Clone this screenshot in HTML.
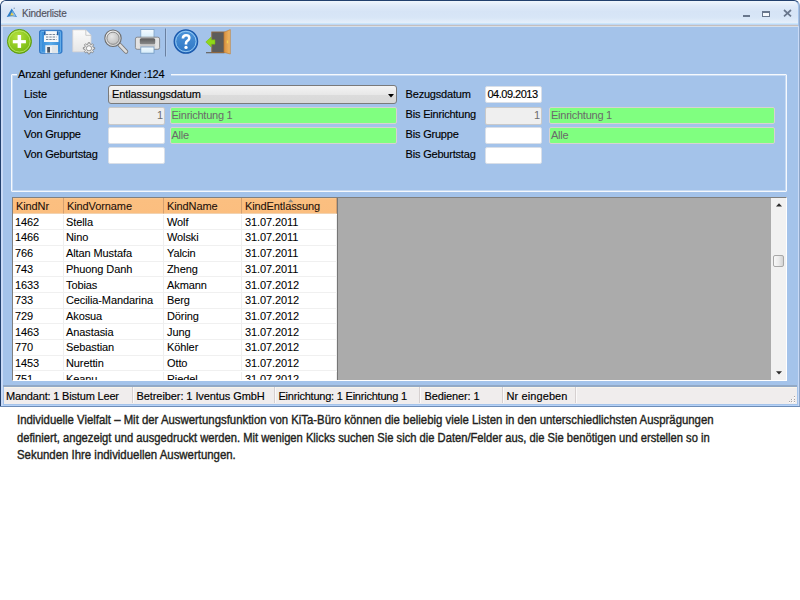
<!DOCTYPE html>
<html><head><meta charset="utf-8">
<style>
*{margin:0;padding:0;box-sizing:border-box}
html,body{width:800px;height:600px;background:#fff;overflow:hidden;position:relative;font-family:"Liberation Sans",sans-serif}
.a{position:absolute}
#win{left:0;top:0;width:800px;height:406px;background:#a4c3ea;border:1px solid #22406e;border-bottom:0;border-right-color:#8ea6c8;border-radius:6px 6px 0 0}
#bline{left:0;top:406px;width:800px;height:1.3px;background:#6d8cb6}
#bhl{left:3px;top:404.8px;width:795px;height:1px;background:#b6d2f8}
#lcol{left:1px;top:26px;width:1.8px;height:380px;background:#c9daf6}
#rcol{left:797.5px;top:26px;width:1.5px;height:380px;background:#c9daf6}
#title{left:1px;top:1px;width:797px;height:24px;background:linear-gradient(#f0f6fd,#dfeaf9 20%,#d6e4f6 45%,#d8e6f7 70%,#e6effa 92%);border-radius:5px 5px 0 0}
#tline{left:1px;top:23px;width:797px;height:1px;background:#cbe6fa}
#tline0{left:1px;top:24px;width:797px;height:1px;background:#c0d6f2}
#tline2{left:1px;top:25px;width:797px;height:1px;background:#c5bfbd}
#tline3{left:1px;top:26px;width:797px;height:1px;background:#d6dfea}
.lbl{font-size:11px;color:#000;-webkit-text-stroke:0.15px currentColor;white-space:nowrap;line-height:13px}
.tb{background:#fff;border:1px solid #d9dfe8;border-radius:2px}
.tbg{background:#efefef;border:1px solid #c9c9c9;border-radius:2px;font-size:11px;color:#6d6d6d;text-align:right;padding-right:1px;line-height:15px}
.grn{background:#80ff80;border:1px solid #d8d2d2;border-radius:2px;font-size:11px;color:#6a6a6a;padding-left:1px;letter-spacing:-0.25px;line-height:15px}
#grid{left:12px;top:197px;width:775px;height:184px;background:#ababab;border:1px solid #808080;border-right-color:#fff;border-bottom-color:#fff}
.hd{background:linear-gradient(#fcc893,#fbbf80 12%,#fbbe7f);border-right:1px solid #d4a070;border-bottom:1px solid #f2d2b0;font-size:11px;color:#1e100a;-webkit-text-stroke:0.08px currentColor;line-height:15px;padding-top:0.5px;padding-left:3px;letter-spacing:-0.1px;white-space:nowrap}
.cell{background:#fff;border-right:1px solid #efefef;border-bottom:1px solid #f0f0f0;font-size:11px;color:#000;-webkit-text-stroke:0.08px currentColor;line-height:15px;padding-top:0.3px;padding-left:2px;letter-spacing:-0.1px;white-space:nowrap;overflow:hidden}
#sb{left:758px;top:0;width:15px;height:182px;background:#f1f1f1}
#status{left:4px;top:386.5px;width:793px;height:17px;background:#f0eded;border-top:1px solid #faf5ea}
#sshadow{left:3px;top:385px;width:794px;height:1.5px;background:#92a9c6}
.sp{font-size:11px;color:#000;-webkit-text-stroke:0.15px currentColor;white-space:nowrap;line-height:17px}
.sep{width:1px;height:16px;top:1px;background:#d6d0d0;box-shadow:1px 0 0 #fbf9f9}
.txt{font-size:13.2px;color:#231f20;-webkit-text-stroke:0.4px #231f20;white-space:nowrap;transform-origin:0 0;line-height:15px}
</style></head><body>
<div id="win" class="a"></div>
<div id="bline" class="a"></div>
<div id="bhl" class="a"></div>
<div id="title" class="a"></div>
<div id="tline" class="a"></div>
<div id="tline0" class="a"></div>
<div id="lcol" class="a"></div>
<div id="rcol" class="a"></div>
<div id="tline2" class="a"></div>
<div id="tline3" class="a"></div>
<!-- title -->
<svg class="a" style="left:0;top:0" width="22" height="22" viewBox="0 0 22 22">
<path d="M11.7 8.4 L17 16.9 Q11.8 15.4 6.7 17.1 Z" fill="#2c7cc6"/>
<path d="M12.3 10.6 L15.9 16.3 Q13.8 15.7 12.4 15.6 Z" fill="#a8d0f4" opacity="0.8"/>
<path d="M11.7 12.2 L13.8 15.3 L10.2 15.5 Z" fill="#f2d24a"/>
<circle cx="14.2" cy="8.3" r="0.7" fill="#7a98b8"/>
</svg>
<div class="a lbl" style="left:22px;top:7px;font-size:10px;color:#52525e;letter-spacing:-0.2px">Kinderliste</div>
<!-- window buttons -->
<div class="a" style="left:743px;top:15px;width:6.5px;height:2.2px;background:#68768c"></div>
<div class="a" style="left:762.3px;top:10.8px;width:8px;height:6px;border:1px solid #68768c;border-top-width:2.8px;background:#f4f8fc"></div>
<svg class="a" style="left:782.5px;top:9.3px" width="9" height="8" viewBox="0 0 9 8"><path d="M1 1 L8 7.3 M8 1 L1 7.3" stroke="#68768c" stroke-width="1.7"/></svg>

<!-- toolbar -->
<svg class="a" style="left:0;top:26px" width="240" height="34" viewBox="0 26 240 34">
  <defs>
    <radialGradient id="gg" cx="0.4" cy="0.3" r="0.75"><stop offset="0" stop-color="#b4e040"/><stop offset="0.6" stop-color="#8cc81e"/><stop offset="1" stop-color="#70b010"/></radialGradient>
    <linearGradient id="bg" x1="0" y1="0" x2="0" y2="1"><stop offset="0" stop-color="#4d95da"/><stop offset="1" stop-color="#2f76c4"/></linearGradient>
    <linearGradient id="mring" x1="0" y1="0" x2="1" y2="1"><stop offset="0" stop-color="#fafafa"/><stop offset="1" stop-color="#c8c8c8"/></linearGradient>
    <radialGradient id="mglass" cx="0.4" cy="0.35" r="0.7"><stop offset="0" stop-color="#e6e6e6"/><stop offset="1" stop-color="#bdbdbd"/></radialGradient>
    <linearGradient id="doc" x1="0" y1="0" x2="0" y2="1"><stop offset="0" stop-color="#fbfbfb"/><stop offset="1" stop-color="#e6e6e6"/></linearGradient>
    <linearGradient id="paper" x1="0" y1="0" x2="0" y2="1"><stop offset="0" stop-color="#f4fbff"/><stop offset="1" stop-color="#d4ecfa"/></linearGradient>
    <linearGradient id="band" x1="0" y1="0" x2="0" y2="1"><stop offset="0" stop-color="#5a5a5a"/><stop offset="1" stop-color="#8c8c8c"/></linearGradient>
    <linearGradient id="door" x1="0" y1="0" x2="1" y2="0"><stop offset="0" stop-color="#d8903e"/><stop offset="1" stop-color="#f0b868"/></linearGradient>
    <linearGradient id="fl" x1="0" y1="0" x2="1" y2="0"><stop offset="0" stop-color="#2f86d6"/><stop offset="0.5" stop-color="#5aaae8"/><stop offset="1" stop-color="#2f86d6"/></linearGradient>
  </defs>
  <!-- green plus -->
  <circle cx="19.45" cy="41.45" r="12" fill="url(#gg)" stroke="#5c9a0e" stroke-width="1"/>
  <circle cx="19.45" cy="41.45" r="10.6" fill="none" stroke="#c8f080" stroke-width="0.9" opacity="0.75"/>
  <rect x="17.6" y="35" width="3.5" height="12.9" fill="#fff"/>
  <rect x="12.8" y="40.1" width="13.1" height="3.2" fill="#fff"/>
  <!-- floppy -->
  <rect x="39.5" y="30.3" width="22.5" height="23" rx="1.8" fill="url(#fl)" stroke="#2c72c0" stroke-width="0.9"/>
  <rect x="41" y="31.5" width="19.5" height="20.8" rx="1" fill="none" stroke="#8cc8f4" stroke-width="0.7" opacity="0.8"/>
  <rect x="44" y="31.2" width="14.5" height="10.8" fill="#f6f8fa"/>
  <rect x="44" y="31.2" width="1.6" height="4" fill="#1d5fa8"/>
  <rect x="56.9" y="31.2" width="1.6" height="4" fill="#1d5fa8"/>
  <path d="M46 34.5 H56.5 M46 37 H56.5 M46 39.5 H56.5" stroke="#6a7a8e" stroke-width="0.9" stroke-dasharray="2.4 0.9"/>
  <rect x="45.3" y="45.2" width="12.7" height="8" fill="#eef1f4"/>
  <rect x="52" y="45.2" width="6" height="8" fill="#dfe5ea"/>
  <rect x="47.2" y="47" width="2.8" height="5.6" fill="#4a5563"/>
  <!-- document gear -->
  <path d="M72.8 30 H85.8 L91 35.3 V51.8 H72.8 Z" fill="url(#doc)" stroke="#dcd6d0" stroke-width="0.7"/>
  <path d="M85.8 30 V35.3 H91" fill="#f8f8f8" stroke="#b8b8b8" stroke-width="0.7"/>
  <path d="M93.16 47.23 L94.65 47.54 L94.65 49.06 L93.16 49.37 L92.70 50.49 L93.53 51.76 L92.46 52.83 L91.19 52.00 L90.07 52.46 L89.76 53.95 L88.24 53.95 L87.93 52.46 L86.81 52.00 L85.54 52.83 L84.47 51.76 L85.30 50.49 L84.84 49.37 L83.35 49.06 L83.35 47.54 L84.84 47.23 L85.30 46.11 L84.47 44.84 L85.54 43.77 L86.81 44.60 L87.93 44.14 L88.24 42.65 L89.76 42.65 L90.07 44.14 L91.19 44.60 L92.46 43.77 L93.53 44.84 L92.70 46.11 Z" fill="#ececec" stroke="#7a7a7a" stroke-width="0.8"/>
  <circle cx="89" cy="48.3" r="2.6" fill="#fafafa" stroke="#8a8a8a" stroke-width="0.9"/>
  <!-- magnifier -->
  <path d="M119.8 45 L126 51.6" stroke="#7c7c7c" stroke-width="4.4" stroke-linecap="round"/>
  <path d="M119.8 45 L126 51.6" stroke="#dedede" stroke-width="2.6" stroke-linecap="round"/>
  <circle cx="113" cy="38.25" r="8.2" fill="url(#mring)" stroke="#6e6e6e" stroke-width="1.1"/>
  <circle cx="113" cy="38.25" r="6.1" fill="url(#mglass)" stroke="#8c8c8c" stroke-width="1"/>
  <!-- printer -->
  <rect x="140.8" y="29.5" width="13.2" height="8.8" fill="url(#paper)" stroke="#7fa2c6" stroke-width="0.8"/>
  <path d="M137.2 37.2 H157.8 Q159.6 37.2 159.6 39 V47.6 Q159.6 49.3 157.8 49.3 H137.2 Q135.4 49.3 135.4 47.6 V39 Q135.4 37.2 137.2 37.2 Z" fill="#e2e2e2" stroke="#7a7a7a" stroke-width="0.8"/>
  <rect x="139.8" y="38.3" width="15.4" height="6.2" rx="1.5" fill="url(#band)"/>
  <rect x="139.8" y="44.5" width="15.4" height="2.2" fill="#c8c8c8"/>
  <rect x="140.8" y="47" width="13.2" height="6.2" fill="url(#paper)" stroke="#6f96bf" stroke-width="0.8"/>
  <!-- separator -->
  <rect x="165" y="28.5" width="1" height="28" fill="#6a80a0"/>
  <rect x="166" y="28.5" width="0.6" height="28" fill="#c8dcf4" opacity="0.6"/>
  <!-- help -->
  <circle cx="185.9" cy="41.5" r="11.7" fill="url(#bg)" stroke="#1a58ac" stroke-width="1.3"/>
  <circle cx="185.9" cy="41.5" r="10.2" fill="none" stroke="#9ed0f6" stroke-width="0.9"/>
  <path d="M182.9 38.4 Q182.9 35.2 186.1 35.2 Q189.3 35.2 189.3 37.9 Q189.3 39.8 187.4 40.9 Q186 41.7 186 43.2 V44.6" fill="none" stroke="#fff" stroke-width="2.6"/>
  <circle cx="186" cy="47.4" r="1.65" fill="#fff"/>
  <!-- exit door -->
  <rect x="206" y="52" width="18.5" height="1.3" fill="#6a6a6a"/>
  <rect x="211.8" y="32" width="12.4" height="20.5" fill="#5c5c5c" stroke="#94683c" stroke-width="0.9"/>
  <path d="M224 32.2 L230.3 29.6 V54 L224 52.4 Z" fill="url(#door)" stroke="#b87a38" stroke-width="0.6"/>
  <rect x="226.8" y="40.5" width="1.4" height="2.8" fill="#f4d050"/>
  <path d="M205.8 42 L211.2 37 V39.8 H215 V44.2 H211.2 V47 Z" fill="#90d818" stroke="#70b010" stroke-width="0.5"/>
</svg>

<!-- group box -->
<div class="a" style="left:11px;top:74px;width:776px;height:118px;border:1px solid #f6f9fd;border-radius:1px;box-shadow:inset 0 0 0 1px rgba(240,246,255,0.45)"></div>
<div class="a" style="left:17px;top:68px;width:154px;height:13px;background:#a4c3ea"></div>
<div class="a lbl" style="left:18px;top:68px;letter-spacing:-0.18px">Anzahl gefundener Kinder :124</div>

<div class="a lbl" style="left:24px;top:88px">Liste</div>
<div class="a lbl" style="left:24px;top:108px;letter-spacing:-0.2px">Von Einrichtung</div>
<div class="a lbl" style="left:24px;top:128px;letter-spacing:-0.2px">Von Gruppe</div>
<div class="a lbl" style="left:24px;top:148px;letter-spacing:-0.2px">Von Geburtstag</div>

<div class="a" style="left:108px;top:85px;width:289px;height:19px;border:1px solid #7a7a7a;border-radius:3px;background:linear-gradient(#f4f4f4,#e8e8e8 50%,#dcdcdc 51%,#d8d8d8)"></div>
<div class="a lbl" style="left:112px;top:88px;letter-spacing:-0.1px">Entlassungsdatum</div>
<svg class="a" style="left:387.5px;top:93.5px" width="6" height="4"><path d="M0 0 H6 L3 3.5 Z" fill="#000"/></svg>

<div class="a tbg" style="left:108px;top:107px;width:57px;height:17.5px">1</div>
<div class="a tb" style="left:108px;top:126.8px;width:57px;height:17.5px"></div>
<div class="a tb" style="left:108px;top:146.7px;width:57px;height:17.5px"></div>
<div class="a grn" style="left:169.5px;top:107px;width:227.5px;height:17px">Einrichtung 1</div>
<div class="a grn" style="left:169.5px;top:127px;width:227.5px;height:17px">Alle</div>

<div class="a lbl" style="left:405.6px;top:88px;letter-spacing:-0.2px">Bezugsdatum</div>
<div class="a lbl" style="left:405.6px;top:108px;letter-spacing:-0.2px">Bis Einrichtung</div>
<div class="a lbl" style="left:405.6px;top:128px;letter-spacing:-0.2px">Bis Gruppe</div>
<div class="a lbl" style="left:405.6px;top:148px;letter-spacing:-0.2px">Bis Geburtstag</div>
<div class="a tb" style="left:485px;top:86px;width:57px;height:17px"></div>
<div class="a lbl" style="left:487.5px;top:88px;letter-spacing:-0.5px">04.09.2013</div>
<div class="a tbg" style="left:485px;top:107px;width:57px;height:17.5px">1</div>
<div class="a tb" style="left:485px;top:126.8px;width:57px;height:17.5px"></div>
<div class="a tb" style="left:485px;top:146.7px;width:57px;height:17.5px"></div>
<div class="a grn" style="left:549px;top:107px;width:226px;height:17px">Einrichtung 1</div>
<div class="a grn" style="left:549px;top:127px;width:226px;height:17px">Alle</div>

<!-- grid -->
<div id="grid" class="a">
<div id="gridin" class="a" style="left:0;top:0;width:325px;height:182px;overflow:hidden;background:#fff">
<div class="a hd" style="left:0px;top:0;width:51px;height:15.5px">KindNr</div>
<div class="a hd" style="left:51px;top:0;width:100px;height:15.5px">KindVorname</div>
<div class="a hd" style="left:151px;top:0;width:78px;height:15.5px">KindName</div>
<div class="a hd" style="left:229px;top:0;width:95px;height:15.5px">KindEntlassung</div>
<div class="a" style="left:324px;top:0;width:1px;height:182px;background:#767676"></div>
<svg class="a" style="left:275px;top:0.5px" width="6" height="4"><path d="M0 3.2 L2.7 0.3 L5.4 3.2 Z" fill="#8f8a80"/></svg>
<div class="a cell" style="left:0px;top:16.50px;width:51px;height:15.70px;padding-left:2px">1462</div>
<div class="a cell" style="left:51px;top:16.50px;width:100px;height:15.70px;padding-left:2px">Stella</div>
<div class="a cell" style="left:151px;top:16.50px;width:78px;height:15.70px;padding-left:3px">Wolf</div>
<div class="a cell" style="left:229px;top:16.50px;width:95px;height:15.70px;padding-left:3px">31.07.2011</div>
<div class="a cell" style="left:0px;top:32.20px;width:51px;height:15.70px;padding-left:2px">1466</div>
<div class="a cell" style="left:51px;top:32.20px;width:100px;height:15.70px;padding-left:2px">Nino</div>
<div class="a cell" style="left:151px;top:32.20px;width:78px;height:15.70px;padding-left:3px">Wolski</div>
<div class="a cell" style="left:229px;top:32.20px;width:95px;height:15.70px;padding-left:3px">31.07.2011</div>
<div class="a cell" style="left:0px;top:47.90px;width:51px;height:15.70px;padding-left:2px">766</div>
<div class="a cell" style="left:51px;top:47.90px;width:100px;height:15.70px;padding-left:2px">Altan Mustafa</div>
<div class="a cell" style="left:151px;top:47.90px;width:78px;height:15.70px;padding-left:3px">Yalcin</div>
<div class="a cell" style="left:229px;top:47.90px;width:95px;height:15.70px;padding-left:3px">31.07.2011</div>
<div class="a cell" style="left:0px;top:63.60px;width:51px;height:15.70px;padding-left:2px">743</div>
<div class="a cell" style="left:51px;top:63.60px;width:100px;height:15.70px;padding-left:2px">Phuong Danh</div>
<div class="a cell" style="left:151px;top:63.60px;width:78px;height:15.70px;padding-left:3px">Zheng</div>
<div class="a cell" style="left:229px;top:63.60px;width:95px;height:15.70px;padding-left:3px">31.07.2011</div>
<div class="a cell" style="left:0px;top:79.30px;width:51px;height:15.70px;padding-left:2px">1633</div>
<div class="a cell" style="left:51px;top:79.30px;width:100px;height:15.70px;padding-left:2px">Tobias</div>
<div class="a cell" style="left:151px;top:79.30px;width:78px;height:15.70px;padding-left:3px">Akmann</div>
<div class="a cell" style="left:229px;top:79.30px;width:95px;height:15.70px;padding-left:3px">31.07.2012</div>
<div class="a cell" style="left:0px;top:95.00px;width:51px;height:15.70px;padding-left:2px">733</div>
<div class="a cell" style="left:51px;top:95.00px;width:100px;height:15.70px;padding-left:2px">Cecilia-Mandarina</div>
<div class="a cell" style="left:151px;top:95.00px;width:78px;height:15.70px;padding-left:3px">Berg</div>
<div class="a cell" style="left:229px;top:95.00px;width:95px;height:15.70px;padding-left:3px">31.07.2012</div>
<div class="a cell" style="left:0px;top:110.70px;width:51px;height:15.70px;padding-left:2px">729</div>
<div class="a cell" style="left:51px;top:110.70px;width:100px;height:15.70px;padding-left:2px">Akosua</div>
<div class="a cell" style="left:151px;top:110.70px;width:78px;height:15.70px;padding-left:3px">Döring</div>
<div class="a cell" style="left:229px;top:110.70px;width:95px;height:15.70px;padding-left:3px">31.07.2012</div>
<div class="a cell" style="left:0px;top:126.40px;width:51px;height:15.70px;padding-left:2px">1463</div>
<div class="a cell" style="left:51px;top:126.40px;width:100px;height:15.70px;padding-left:2px">Anastasia</div>
<div class="a cell" style="left:151px;top:126.40px;width:78px;height:15.70px;padding-left:3px">Jung</div>
<div class="a cell" style="left:229px;top:126.40px;width:95px;height:15.70px;padding-left:3px">31.07.2012</div>
<div class="a cell" style="left:0px;top:142.10px;width:51px;height:15.70px;padding-left:2px">770</div>
<div class="a cell" style="left:51px;top:142.10px;width:100px;height:15.70px;padding-left:2px">Sebastian</div>
<div class="a cell" style="left:151px;top:142.10px;width:78px;height:15.70px;padding-left:3px">Köhler</div>
<div class="a cell" style="left:229px;top:142.10px;width:95px;height:15.70px;padding-left:3px">31.07.2012</div>
<div class="a cell" style="left:0px;top:157.80px;width:51px;height:15.70px;padding-left:2px">1453</div>
<div class="a cell" style="left:51px;top:157.80px;width:100px;height:15.70px;padding-left:2px">Nurettin</div>
<div class="a cell" style="left:151px;top:157.80px;width:78px;height:15.70px;padding-left:3px">Otto</div>
<div class="a cell" style="left:229px;top:157.80px;width:95px;height:15.70px;padding-left:3px">31.07.2012</div>
<div class="a cell" style="left:0px;top:173.50px;width:51px;height:15.70px;padding-left:2px">751</div>
<div class="a cell" style="left:51px;top:173.50px;width:100px;height:15.70px;padding-left:2px">Keanu</div>
<div class="a cell" style="left:151px;top:173.50px;width:78px;height:15.70px;padding-left:3px">Riedel</div>
<div class="a cell" style="left:229px;top:173.50px;width:95px;height:15.70px;padding-left:3px">31.07.2012</div>
</div>
<div id="sb" class="a">
<svg class="a" style="left:4.5px;top:5.2px" width="6" height="4"><path d="M0 3.5 L3 0.3 L6 3.5 Z" fill="#2a2a2a"/></svg>
<div class="a" style="left:1.5px;top:57px;width:11.5px;height:12px;border:1px solid #a8a8a8;border-radius:2px;background:linear-gradient(90deg,#f8f8f8,#ececec 50%,#d4d4d4)"></div>
<svg class="a" style="left:4.5px;top:172.5px" width="6" height="4"><path d="M0 0.3 L3 3.5 L6 0.3 Z" fill="#2a2a2a"/></svg>
</div>
</div>

<!-- status -->
<div id="sshadow" class="a"></div>
<div id="status" class="a"></div>
<div class="a sp" style="left:6px;top:388px;letter-spacing:-0.18px">Mandant: 1 Bistum Leer</div>
<div class="a sep" style="left:132px;top:387px"></div>
<div class="a sp" style="left:136.5px;top:388px;letter-spacing:-0.08px">Betreiber: 1 Iventus GmbH</div>
<div class="a sep" style="left:274px;top:387px"></div>
<div class="a sp" style="left:278.5px;top:388px;letter-spacing:-0.22px">Einrichtung: 1 Einrichtung 1</div>
<div class="a sep" style="left:419px;top:387px"></div>
<div class="a sp" style="left:424.5px;top:388px;letter-spacing:-0.12px">Bediener: 1</div>
<div class="a sep" style="left:502px;top:387px"></div>
<div class="a sp" style="left:506.5px;top:388px;letter-spacing:0.1px">Nr eingeben</div>
<div class="a sep" style="left:575px;top:387px"></div>
<div class="a" style="left:794.2px;top:396.7px;width:1.3px;height:1.3px;background:#fff"></div><div class="a" style="left:793.5px;top:396px;width:1.3px;height:1.3px;background:#a9a4a4"></div>
<div class="a" style="left:791.7px;top:399.2px;width:1.3px;height:1.3px;background:#fff"></div><div class="a" style="left:791px;top:398.5px;width:1.3px;height:1.3px;background:#a9a4a4"></div>
<div class="a" style="left:794.2px;top:399.2px;width:1.3px;height:1.3px;background:#fff"></div><div class="a" style="left:793.5px;top:398.5px;width:1.3px;height:1.3px;background:#a9a4a4"></div>
<div class="a" style="left:789.2px;top:401.7px;width:1.3px;height:1.3px;background:#fff"></div><div class="a" style="left:788.5px;top:401px;width:1.3px;height:1.3px;background:#a9a4a4"></div>
<div class="a" style="left:791.7px;top:401.7px;width:1.3px;height:1.3px;background:#fff"></div><div class="a" style="left:791px;top:401px;width:1.3px;height:1.3px;background:#a9a4a4"></div>
<div class="a" style="left:794.2px;top:401.7px;width:1.3px;height:1.3px;background:#fff"></div><div class="a" style="left:793.5px;top:401px;width:1.3px;height:1.3px;background:#a9a4a4"></div>

<!-- text -->
<div class="a txt" style="left:17px;top:412px;transform:scaleX(0.8625)">Individuelle Vielfalt – Mit der Auswertungsfunktion von KiTa-Büro können die beliebig viele Listen in den unterschiedlichsten Ausprägungen</div>
<div class="a txt" style="left:17px;top:429.5px;transform:scaleX(0.8475)">definiert, angezeigt und ausgedruckt werden. Mit wenigen Klicks suchen Sie sich die Daten/Felder aus, die Sie benötigen und erstellen so in</div>
<div class="a txt" style="left:17px;top:447px;transform:scaleX(0.865)">Sekunden Ihre individuellen Auswertungen.</div>
</body></html>
